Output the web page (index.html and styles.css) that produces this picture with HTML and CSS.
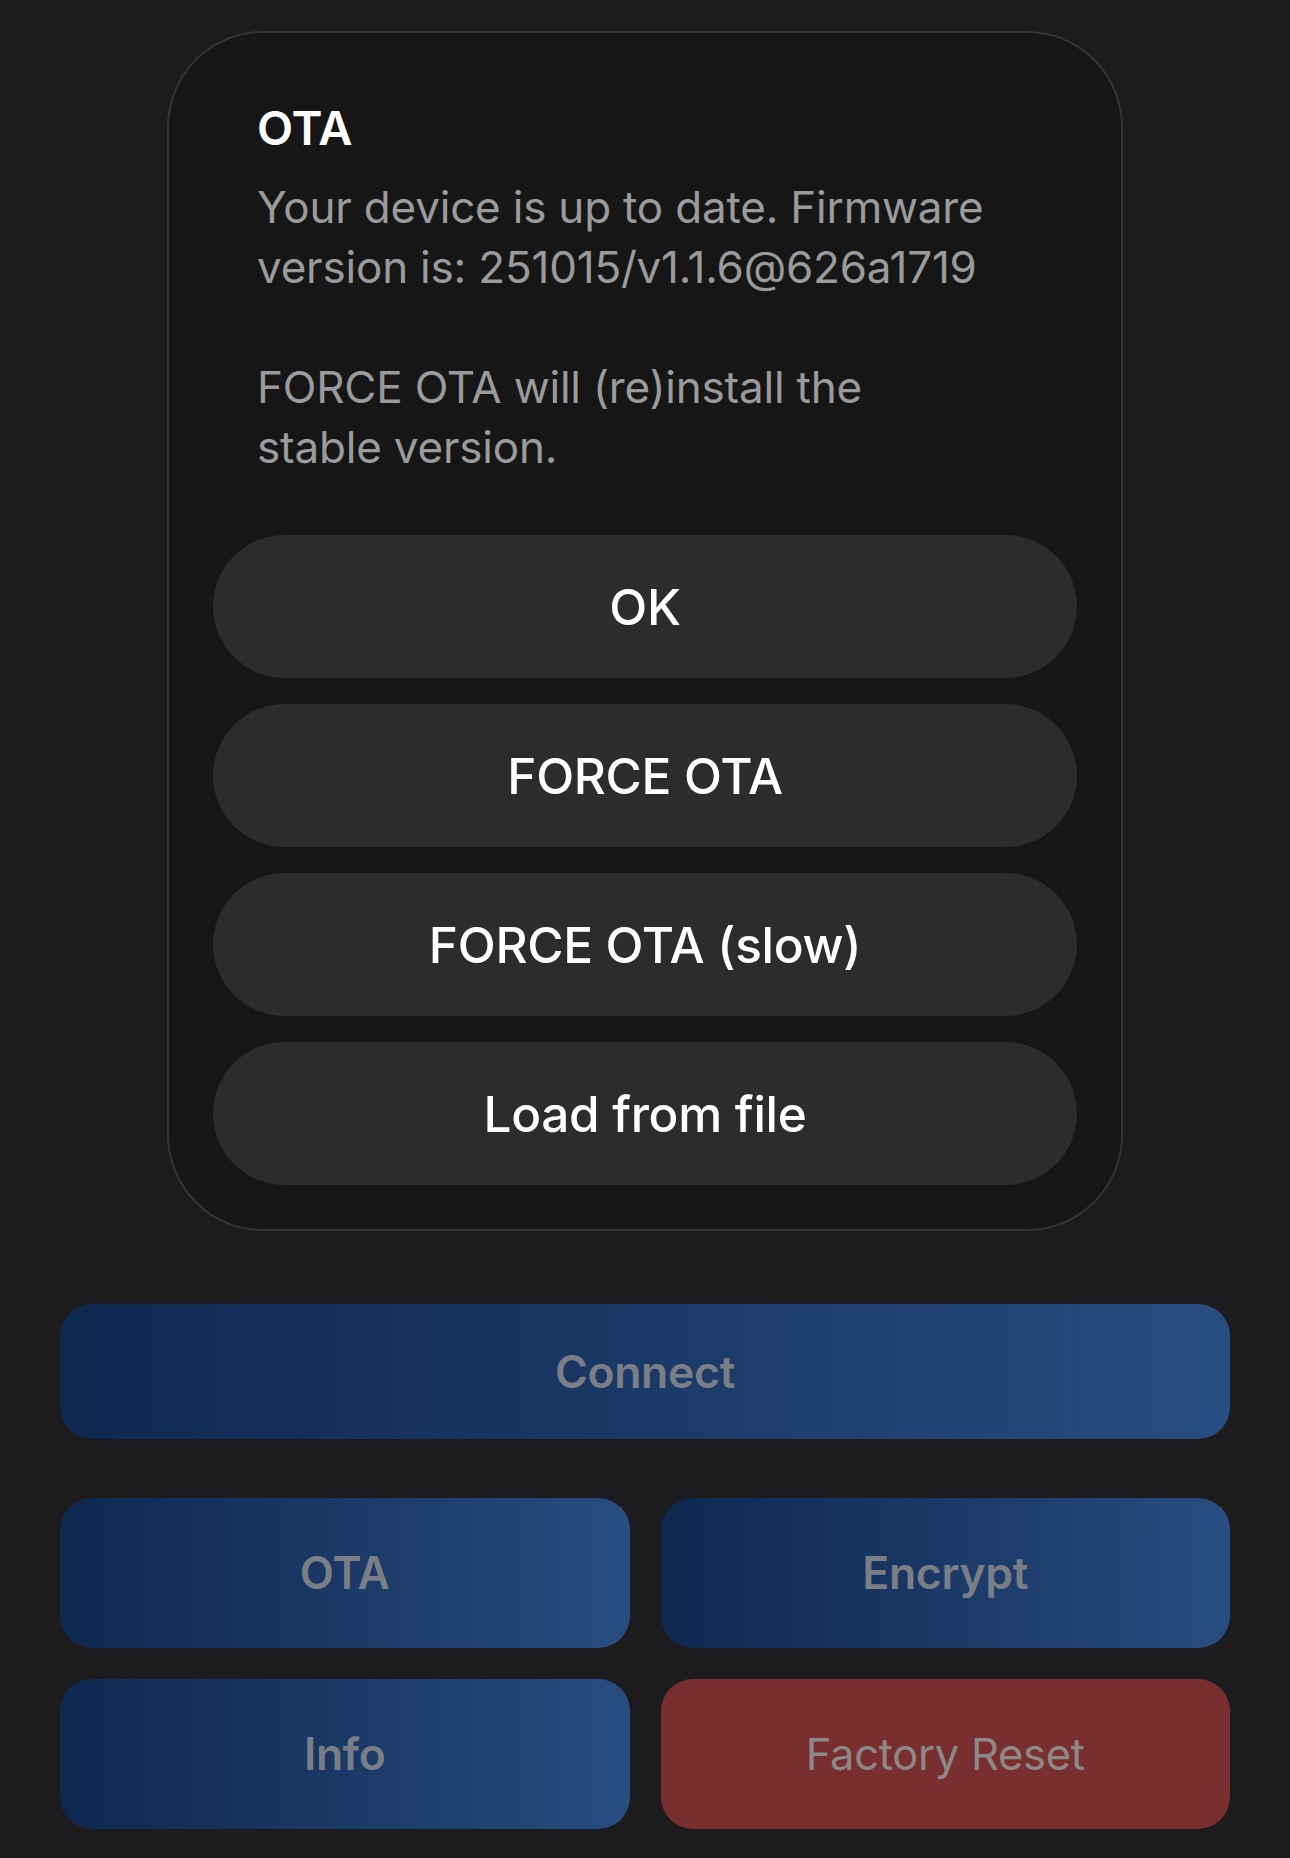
FILE: index.html
```html
<!DOCTYPE html>
<html lang="en">
<head>
<meta charset="utf-8">
<title>OTA</title>
<link rel="stylesheet" href="styles.css">
</head>
<body>
<main class="page">
  <section class="modal">
    <div class="modal-text">
      <h2 class="modal-title">OTA</h2>
      <p class="modal-body">Your device is up to date. Firmware version is: 251015/v1.1.6@626a1719<br><br>FORCE OTA will (re)install the stable version.</p>
    </div>
    <div class="modal-actions">
      <button class="pill">OK</button>
      <button class="pill">FORCE OTA</button>
      <button class="pill">FORCE OTA (slow)</button>
      <button class="pill">Load from file</button>
    </div>
  </section>

  <button class="action action-wide">Connect</button>
  <div class="action-grid">
    <button class="action">OTA</button>
    <button class="action">Encrypt</button>
    <button class="action">Info</button>
    <button class="action action-danger">Factory Reset</button>
  </div>
</main>
</body>
</html>
```
FILE: styles.css
```css
* { box-sizing: border-box; }
html, body {
  margin: 0;
  padding: 0;
  background: #1c1c1e;
  font-family: Inter, "Noto Sans", sans-serif;
  -webkit-font-smoothing: antialiased;
}
.page {
  padding: 31px 60px 30px;
  display: flex;
  flex-direction: column;
}
.modal {
  width: 956px;
  align-self: center;
  background: #161616;
  border: 2px solid #353537;
  border-radius: 96px;
  padding: 66px 44px 44px;
  display: flex;
  flex-direction: column;
}
.modal-text {
  padding: 0 90px 0 44px;
}
.modal-title {
  margin: 0;
  font-size: 47px;
  line-height: 58px;
  font-weight: 600;
  color: #ffffff;
  letter-spacing: -0.2px;
}
.modal-body {
  margin: 20px 0 0;
  font-size: 44px;
  line-height: 60px;
  font-weight: 400;
  color: #9b9b9d;
  letter-spacing: -0.2px;
}
.modal-actions {
  margin-top: 58px;
  display: flex;
  flex-direction: column;
  gap: 26px;
}
.pill {
  height: 143px;
  border: none;
  border-radius: 72px;
  background: #2c2c2e;
  color: #ffffff;
  font-family: inherit;
  font-size: 49.5px;
  font-weight: 500;
  letter-spacing: -0.3px;
  padding: 0;
}
.action {
  border: none;
  border-radius: 32px;
  background: linear-gradient(90deg, #0e2850 0%, #1a3764 45%, #284d80 100%);
  color: #7a7e87;
  font-family: inherit;
  font-size: 44.5px;
  font-weight: 600;
  letter-spacing: -0.3px;
  padding: 0;
  height: 150px;
}
.action-wide {
  margin-top: 73px;
  height: 135px;
}
.action-grid {
  margin-top: 59px;
  display: grid;
  grid-template-columns: 1fr 1fr;
  gap: 31px;
}
.action-danger {
  background: #792e2f;
  color: #8f8888;
  font-weight: 400;
  font-size: 43.5px;
}
```
